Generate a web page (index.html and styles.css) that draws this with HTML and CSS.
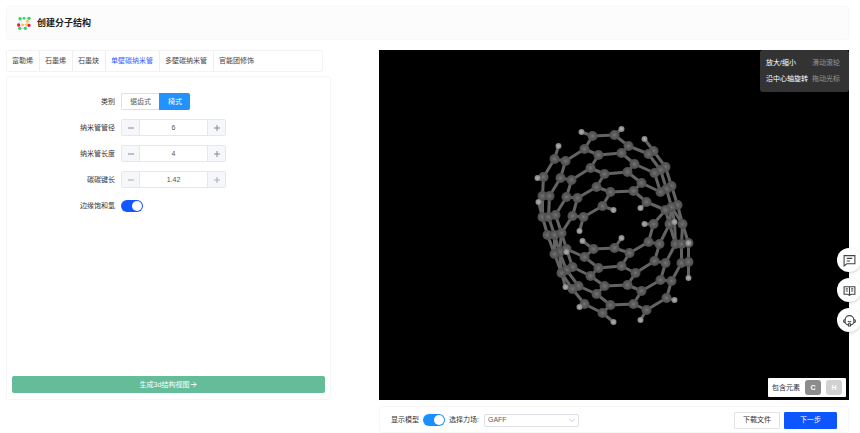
FILE: index.html
```html
<!DOCTYPE html>
<html lang="zh-CN">
<head>
  <meta charset="UTF-8" />
  <meta name="viewport" content="width=device-width, initial-scale=1.0"/>
  <title>创建分子结构</title>
  <link rel="stylesheet" href="styles.css">
</head>
<body>

  <div class="page">
    <header class="header">
      <svg class="logo" viewBox="0 0 42 42" aria-hidden="true">
        <g stroke="#a9d8f7" stroke-width="2" fill="none">
          <path d="M9 8 21 7 36 7V28L25 37H8L5 27 9 8M9 8 17 27 29 26 36 28M17 27 8 37M31 16 29 26 25 37"/>
        </g>
        <g fill="#35d65b">
          <circle cx="9" cy="8" r="5"/><circle cx="21" cy="7" r="4"/><circle cx="36" cy="7" r="5"/>
          <circle cx="8" cy="37" r="5"/><circle cx="25" cy="37" r="5"/>
        </g>
        <g fill="#f5134f"><circle cx="5" cy="27" r="5"/><circle cx="36" cy="28" r="5"/></g>
        <g fill="#ffc51b"><circle cx="17" cy="27" r="4"/><circle cx="29" cy="26" r="4"/><circle cx="31" cy="16" r="4"/></g>
      </svg>
      <h1>创建分子结构</h1>
    </header>

    <main class="workspace">
      <section class="side">
        <nav class="tabs">
          <a href="#fullerene">富勒烯</a>
          <a href="#graphene">石墨烯</a>
          <a href="#graphyne">石墨炔</a>
          <a href="#swcnt" class="active" aria-current="page">单壁碳纳米管</a>
          <a href="#mwcnt">多壁碳纳米管</a>
          <a href="#functional">官能团修饰</a>
        </nav>

        <form class="panel">
          <div class="row">
            <span class="label" id="type-label">类别</span>
            <div class="segmented" role="radiogroup" aria-labelledby="type-label">
              <label><input type="radio" name="type" value="zigzag"><span>锯齿式</span></label>
              <label><input type="radio" name="type" value="armchair" checked><span>椅式</span></label>
            </div>
          </div>
          <div class="row">
            <label class="label" for="diameter">纳米管管径</label>
            <div class="stepper">
              <button type="button" data-step="-1" aria-label="减少">
                <svg viewBox="0 0 8 8"><path d="M1 4h6"/></svg>
              </button>
              <input id="diameter" type="text" value="6">
              <button type="button" data-step="1" aria-label="增加">
                <svg viewBox="0 0 8 8"><path d="M1 4h6M4 1v6"/></svg>
              </button>
            </div>
          </div>
          <div class="row">
            <label class="label" for="length">纳米管长度</label>
            <div class="stepper">
              <button type="button" data-step="-1" aria-label="减少">
                <svg viewBox="0 0 8 8"><path d="M1 4h6"/></svg>
              </button>
              <input id="length" type="text" value="4">
              <button type="button" data-step="1" aria-label="增加">
                <svg viewBox="0 0 8 8"><path d="M1 4h6M4 1v6"/></svg>
              </button>
            </div>
          </div>
          <div class="row">
            <label class="label" for="bond">碳碳键长</label>
            <div class="stepper muted">
              <button type="button" data-step="-0.01" aria-label="减少">
                <svg viewBox="0 0 8 8"><path d="M1 4h6"/></svg>
              </button>
              <input id="bond" type="text" value="1.42">
              <button type="button" data-step="0.01" aria-label="增加">
                <svg viewBox="0 0 8 8"><path d="M1 4h6M4 1v6"/></svg>
              </button>
            </div>
          </div>
          <div class="row">
            <label class="label" for="saturate">边缘饱和氢</label>
            <input class="switch" id="saturate" type="checkbox" role="switch" checked>
          </div>

          <button type="button" class="generate">
            生成3d结构视图
            <svg viewBox="0 0 8 8" aria-hidden="true"><path d="M1 4h6M4 1l3 3-3 3"/></svg>
          </button>
        </form>
      </section>

      <section class="stage">
        <svg class="molecule" id="molecule" viewBox="0 0 469 350" role="img" aria-label="单壁碳纳米管">
          <defs>
            <radialGradient id="carbon">
              <stop offset="0" stop-color="#7a7a7a"/>
              <stop offset="0.3" stop-color="#626262"/>
              <stop offset="1" stop-color="#4c4c4c"/>
            </radialGradient>
            <radialGradient id="hydrogen">
              <stop offset="0" stop-color="#b4b4b4"/>
              <stop offset="1" stop-color="#808080"/>
            </radialGradient>
          </defs>
        </svg>
        <dl class="help">
          <dt>放大/缩小</dt><dd>滑动滚轮</dd>
          <dt>沿中心轴旋转</dt><dd>拖动光标</dd>
        </dl>
        <div class="legend">
          <span>包含元素</span>
          <b class="element">C</b>
          <b class="element light">H</b>
        </div>
      </section>

      <footer class="actions">
        <label for="show">显示模型</label>
        <input class="switch sky" id="show" type="checkbox" role="switch" checked>
        <label for="field">选择力场:</label>
        <div class="select">
          <select id="field"><option>GAFF</option><option>UFF</option></select>
          <svg viewBox="0 0 8 8" aria-hidden="true"><path d="M0 2l4 4 4-4"/></svg>
        </div>
        <button type="button" class="btn download">下载文件</button>
        <button type="button" class="btn primary">下一步</button>
      </footer>
    </main>
  </div>

  <aside class="float">
    <button type="button" aria-label="反馈">
      <svg viewBox="0 0 24 24"><path d="M2 3h20v15H7l-5 4zM7 8h10M7 13h6"/></svg>
    </button>
    <button type="button" aria-label="文档">
      <svg viewBox="0 0 24 24"><path d="M12 5H2v14h7l3 2 3-2h7V5H12v15M5 9h4M5 13h4M15 9h4M15 13h4"/></svg>
    </button>
    <button type="button" aria-label="客服">
      <svg viewBox="0 0 24 24"><path d="M4 11a8 8 0 0 1 16 0M4 10a3 3 0 0 0 0 6zM20 10a3 3 0 0 1 0 6zM4 16c1 2 3 4 6 4M20 16c-1 2-3 4-6 4M9 13q3 3 6 0"/><path d="M10 18h4v4h-4z"/></svg>
    </button>
  </aside>

  <script src="script.js"></script>
</body>
</html>
```
FILE: styles.css
```css
/* ─── Reset & Body ───────────────────────────────────────────────────────── */
* { box-sizing: border-box; margin: 0; padding: 0; }
body {
  background: #fff;
  color: #333;
  font-family: "Liberation Sans", "Noto Sans CJK SC", sans-serif;
  font-size: 7px;
  line-height: 10px;
  overflow-x: hidden;
}
button, input, select { font: inherit; color: inherit; }
button, select { cursor: pointer; }
svg { fill: none; stroke: currentColor; }

.page {
  display: flex;
  flex-direction: column;
  min-height: 100vh;
  padding: 6px 11px 0 6px;
}

/* ─── Header ─────────────────────────────────────────────────────────────── */
.header {
  display: flex;
  align-items: center;
  gap: 6px;
  height: 34px;
  padding: 0 10px;
  background: #fcfcfc;
  border: 1px solid #f7f7f7;
  border-radius: 3px;
}
.logo { width: 14px; height: 14px; stroke: none; }
h1 { font-size: 9px; line-height: 14px; color: #222; }

/* ─── Layout ─────────────────────────────────────────────────────────────── */
.workspace {
  flex: 1;
  display: grid;
  grid-template-columns: 325px minmax(0, 1fr);
  grid-template-rows: 1fr auto;
  gap: 6px 48px;
  padding-top: 10px;
}
.side { display: flex; flex-direction: column; gap: 4px; }

/* ─── Tabs ───────────────────────────────────────────────────────────────── */
.tabs {
  display: flex;
  margin-right: 8px;
  height: 22px;
  border: 1px solid #f3f3f3;
  border-radius: 2px;
}
.tabs a {
  display: flex;
  align-items: center;
  padding: 0 6px 0 5px;
  color: #444;
  text-decoration: none;
  white-space: nowrap;
  border-right: 1px solid #eee;
}
.tabs a:last-child { border-right: 0; }
.tabs a.active { color: #2b62ff; }

/* ─── Form ───────────────────────────────────────────────────────────────── */
.panel {
  flex: 1;
  display: flex;
  flex-direction: column;
  gap: 9px;
  padding: 16px 5px 6px;
  border: 1px solid #f5f5f5;
  border-radius: 3px;
}
.row {
  display: grid;
  grid-template-columns: 103px auto;
  justify-content: start;
  align-items: center;
  gap: 6px;
  min-height: 17px;
}
.label { text-align: right; }

.segmented { display: flex; height: 17px; }
.segmented label { position: relative; display: flex; }
.segmented input { position: absolute; opacity: 0; }
.segmented span {
  display: flex;
  align-items: center;
  padding: 0 8px;
  border: 1px solid #dcdfe6;
  border-width: 1px 0 1px 1px;
  border-radius: 2px 0 0 2px;
  color: #606266;
}
.segmented label:last-child span { border-radius: 0 2px 2px 0; }
.segmented input:checked + span { background: #2292ff; border-color: #2292ff; color: #fff; }

.stepper {
  display: flex;
  width: 105px;
  height: 17px;
  border: 1px solid #e4e7ed;
  border-radius: 2px;
  overflow: hidden;
}
.stepper button {
  display: grid;
  place-items: center;
  width: 17px;
  border: 0;
  background: #f5f7fa;
  color: #888;
}
.stepper.muted button { color: #aaa; }
.stepper svg { width: 8px; height: 8px; }
.stepper input {
  flex: 1;
  min-width: 0;
  border: 1px solid #e4e7ed;
  border-width: 0 1px;
  text-align: center;
  color: #555;
}

.switch {
  appearance: none;
  display: flex;
  width: 22px;
  height: 12px;
  padding: 1px;
  border-radius: 6px;
  background: #ccc;
  cursor: pointer;
}
.switch::before { content: ""; width: 10px; height: 10px; border-radius: 50%; background: #fff; }
.switch:checked { justify-content: flex-end; background: #1158ff; }
.switch.sky:checked { background: #1890ff; }

.generate {
  display: flex;
  align-items: center;
  justify-content: center;
  gap: 1px;
  height: 17px;
  margin-top: auto;
  border: 0;
  border-radius: 2px;
  background: #65bc99;
  color: #fff;
}
.generate svg { width: 7px; height: 7px; }

/* ─── 3D View ────────────────────────────────────────────────────────────── */
.stage { position: relative; background: #000; min-height: 200px; }
.molecule { position: absolute; width: 100%; height: 100%; stroke: none; }
.bond { stroke: #636363; stroke-width: 3; }
.help {
  position: absolute;
  top: 0;
  right: 0;
  display: grid;
  grid-template-columns: auto auto;
  gap: 6px 4px;
  padding: 8px 9px 8px 6px;
  border-radius: 3px;
  background: #333;
  color: #fff;
}
.help dd { color: #999; }
.legend {
  position: absolute;
  right: 3px;
  bottom: 3px;
  display: flex;
  align-items: center;
  gap: 5px;
  height: 19px;
  padding: 0 4px;
  border-radius: 1px;
  background: #fff;
}
.element {
  display: grid;
  place-items: center;
  width: 16px;
  height: 15px;
  border-radius: 3px;
  background: #8c8c8c;
  color: #fff;
}
.element.light { background: #d2d2d2; }

/* ─── Actions ────────────────────────────────────────────────────────────── */
.actions {
  grid-column: 2;
  display: flex;
  align-items: center;
  gap: 4px;
  height: 27px;
  padding: 1px 11px 0;
  border: 1px solid #f7f7f7;
  border-radius: 3px;
}
.select { display: grid; align-items: center; width: 95px; height: 13px; margin-left: 1px; }
.select select {
  grid-area: 1 / 1;
  appearance: none;
  height: 13px;
  padding: 0 3px;
  border: 1px solid #dcdfe6;
  border-radius: 2px;
  background: #fff;
  color: #606266;
}
.select svg {
  grid-area: 1 / 1;
  justify-self: end;
  width: 6px;
  height: 6px;
  margin-right: 4px;
  color: #bbb;
  pointer-events: none;
}
.btn {
  height: 17px;
  padding: 0 8px;
  border: 1px solid #e2e2e2;
  border-radius: 1px;
  background: #fff;
}
.download { margin-left: auto; }
.btn.primary { padding: 0 15px; border-color: #0d55ff; background: #0d55ff; color: #fff; }

/* ─── Floating Buttons ───────────────────────────────────────────────────── */
.float {
  position: fixed;
  right: -1px;
  top: 248px;
  display: flex;
  flex-direction: column;
  gap: 6px;
}
.float button {
  display: grid;
  place-items: center;
  width: 24px;
  height: 24px;
  border: 0;
  border-radius: 50%;
  background: #fff;
  box-shadow: 0 1px 3px rgba(0,0,0,0.2);
  color: #444;
}
.float svg { width: 13px; height: 13px; stroke-width: 2; }
```
FILE: script.js
```javascript
// Projected atom positions: [x, y], hydrogens are listed apart
const carbons = {
  a1: [67, 16], a2: [89, 15], a3: [59, 29], a4: [73, 35], a5: [65, 48], a6: [79, 54],
  a7: [71, 67], a8: [85, 72], a9: [77, 86],
  b1: [29, 39], b2: [40, 41], b3: [35, 58], b4: [46, 60], b5: [41, 77], b6: [52, 78],
  b7: [47, 96], b8: [58, 97],
  c1: [18, 57], c2: [17, 76], c3: [24, 76], c4: [17, 97], c5: [23, 97], c6: [30, 95],
  c7: [22, 115], c8: [29, 115], c9: [36, 113],
  d1: [103, 26], d2: [96, 33], d3: [109, 44], d4: [102, 52], d5: [116, 63], d6: [108, 71],
  d7: [121, 82],
  e1: [128, 31], e2: [123, 34], e3: [140, 47], e4: [135, 50], e5: [129, 53], e6: [146, 66],
  e7: [141, 69], e8: [135, 72], e9: [152, 85], e10: [146, 87], e11: [140, 90],
  f1: [128, 104], f2: [144, 104], f3: [157, 104], f4: [150, 124], f5: [156, 124],
  f6: [163, 123], f7: [156, 143], f8: [163, 142],
  g1: [68, 129], g2: [89, 128], g3: [59, 137], g4: [41, 129], g5: [73, 148], g6: [65, 156],
  g7: [47, 147], g8: [79, 166], g9: [71, 174], g10: [53, 166], g11: [85, 185], g12: [77, 193],
  g13: [59, 184], g14: [47, 169], g15: [41, 150], g16: [36, 153], g17: [34, 132], g18: [29, 134],
  k1: [104, 133], k2: [96, 146], k3: [110, 153], k4: [102, 165], k5: [116, 171],
  k6: [108, 184], k7: [121, 190],
  l1: [123, 122], l2: [134, 124], l3: [129, 141], l4: [140, 143], l5: [135, 160],
  l6: [146, 161], l7: [141, 178]
};
const hydrogens = {
  h1: [56, 12], h2: [96, 9], h3: [33, 26], h4: [12, 58], h5: [13, 82], h6: [88, 90],
  h7: [115, 88], h8: [119, 19], h9: [119, 104], h10: [149, 102], h11: [54, 111],
  h12: [57, 121], h13: [96, 118], h14: [41, 132], h15: [40, 167], h16: [54, 187],
  h17: [88, 202], h18: [115, 200], h19: [149, 180], h20: [163, 158], h21: [163, 123]
};
const bonds = `
  a1-a2 a1-a3 a3-a4 a3-b2 a4-a5 a4-d2 a5-a6 a5-b4 a6-a7 a6-d4 a7-a8 a7-b6 a8-a9 a8-d6 a9-b8
  b1-b2 b2-b3 b3-b4 b4-b5 b5-b6 b6-b7 b7-b8 b1-c1 b3-c3 b5-c6 b7-c9
  c1-c2 c2-c3 c2-c4 c3-c5 c5-c6 c4-c7 c5-c8 c6-c9 c7-c8
  c7-g18 c8-g17 c9-g4 c8-g18 c9-g17 g18-g16 g17-g15 g17-g16 g4-g7 g4-g3 g7-g15 g15-g10 g16-g14 g7-g6 g10-g14 g14-g13 g10-g9
  a2-d1 d1-d2 d2-d3 d3-d4 d4-d5 d5-d6 d6-d7 d1-e2 d3-e5 d5-e8 d7-e11
  e1-e3 e2-e4 e3-e4 e3-e6 e4-e5 e4-e7 e5-e8 e6-e7 e6-e9 e7-e8 e7-e10 e9-e10 e10-e11
  e9-f3 e10-f3 e11-f1 e11-f2 e10-f2 f1-l1 f2-l2 f2-f4 f3-f5 f3-f6 f4-l4 f4-f5 f5-f7 f6-f8 f7-f8 f7-l6
  g1-g2 g1-g3 g3-g5 g5-g6 g6-g8 g8-g9 g9-g11 g11-g12 g12-g13 g5-k2 g8-k4 g11-k6
  g2-k1 k1-k2 k2-k3 k3-k4 k4-k5 k5-k6 k6-k7 k1-l1 k3-l3 k5-l5 k7-l7
  l1-l2 l2-l3 l3-l4 l4-l5 l5-l6 l6-l7
  h1-a1 h2-a2 h3-b1 h4-c1 h5-c2 h5-c4 h6-a9 h7-d7 h8-e1 h9-f1 h10-e10 h10-f4 h11-b8 h12-g1
  h13-g2 h14-g17 h15-g16 h15-g14 h16-g13 h17-g12 h18-k7 h19-l7 h20-f8 h21-f5
`.trim().split(/\s+/);

const svg = document.getElementById('molecule');
const atoms = { ...carbons, ...hydrogens };

function add(parent, tag, attrs) {
  const el = document.createElementNS('http://www.w3.org/2000/svg', tag);
  for (const key in attrs) el.setAttribute(key, attrs[key]);
  parent.appendChild(el);
  return el;
}

const group = add(svg, 'g', { transform: 'translate(146 70)' });
bonds.forEach(bond => {
  const [from, to] = bond.split('-').map(id => atoms[id]);
  add(group, 'line', { class: 'bond', x1: from[0], y1: from[1], x2: to[0], y2: to[1] });
});
Object.values(carbons).forEach(([cx, cy]) => add(group, 'circle', { cx, cy, r: 5, fill: 'url(#carbon)' }));
Object.values(hydrogens).forEach(([cx, cy]) => add(group, 'circle', { cx, cy, r: 3, fill: 'url(#hydrogen)' }));

// Stepper buttons
document.querySelectorAll('.stepper').forEach(stepper => {
  stepper.addEventListener('click', e => {
    const btn = e.target.closest('button');
    if (!btn) return;
    const input = stepper.querySelector('input');
    input.value = Number((Number(input.value) + Number(btn.dataset.step)).toFixed(2));
  });
});
```
